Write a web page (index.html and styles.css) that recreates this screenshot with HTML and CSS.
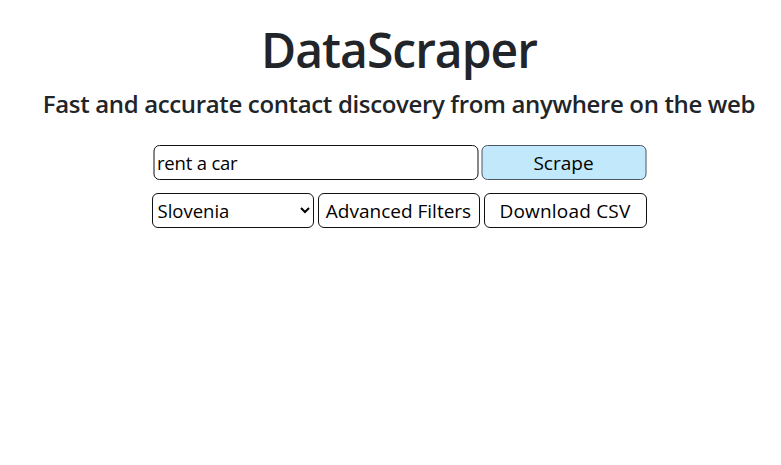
FILE: index.html
```html
<!DOCTYPE html>
<html lang="en">
<head>
<meta charset="utf-8">
<title>DataScraper</title>
<link rel="stylesheet" href="styles.css">
</head>
<body>
<main class="page">
  <h1 class="title">DataScraper</h1>
  <h2 class="subtitle">Fast and accurate contact discovery from anywhere on the web</h2>
  <div class="controls">
    <div class="row row-search">
      <input class="field search" type="text" value="rent a car">
      <button class="btn primary">Scrape</button>
    </div>
    <div class="row row-actions">
      <select class="field country">
        <option>Slovenia</option>
      </select>
      <button class="btn">Advanced Filters</button>
      <button class="btn wide">Download CSV</button>
    </div>
  </div>
</main>
</body>
</html>
```

FILE: styles.css
```css
html, body {
  margin: 0;
  padding: 0;
  background: #ffffff;
}
body {
  font-family: "Open Sans", "Noto Sans", sans-serif;
  color: #212529;
}
.page {
  padding: 0 8px 0 25px;
  display: flex;
  flex-direction: column;
  align-items: center;
}
.title {
  margin: 21px 0 0;
  font-size: 48px;
  font-weight: 600;
  line-height: 58px;
  letter-spacing: -1px;
}
.subtitle {
  margin: 10px 0 0;
  font-size: 24px;
  font-weight: 600;
  line-height: 30px;
  letter-spacing: -0.35px;
}
.controls {
  margin-top: 26px;
  display: flex;
  flex-direction: column;
  align-items: center;
  gap: 13px;
}
.row {
  display: flex;
}
.row-search {
  gap: 3px;
  transform: translateX(0.5px);
}
.row-actions {
  gap: 4px;
}
.field, .btn {
  box-sizing: border-box;
  height: 35px;
  font-family: inherit;
  color: #000;
  border: 1px solid #111;
  border-radius: 6px;
  background: #fff;
  margin: 0;
}
.search {
  width: 325px;
  padding: 0 3px;
  font-size: 18.5px;
  letter-spacing: -0.2px;
}
.country {
  width: 162px;
  padding: 0 1px;
  font-size: 18.5px;
}
.btn {
  width: 162px;
  padding: 0 2px;
  font-size: 19px;
  cursor: pointer;
}
.btn.wide {
  width: 163px;
  letter-spacing: 0.2px;
}
.btn.primary {
  width: 165px;
  background: #c2e8fb;
  border-color: #4b5563;
}
```
